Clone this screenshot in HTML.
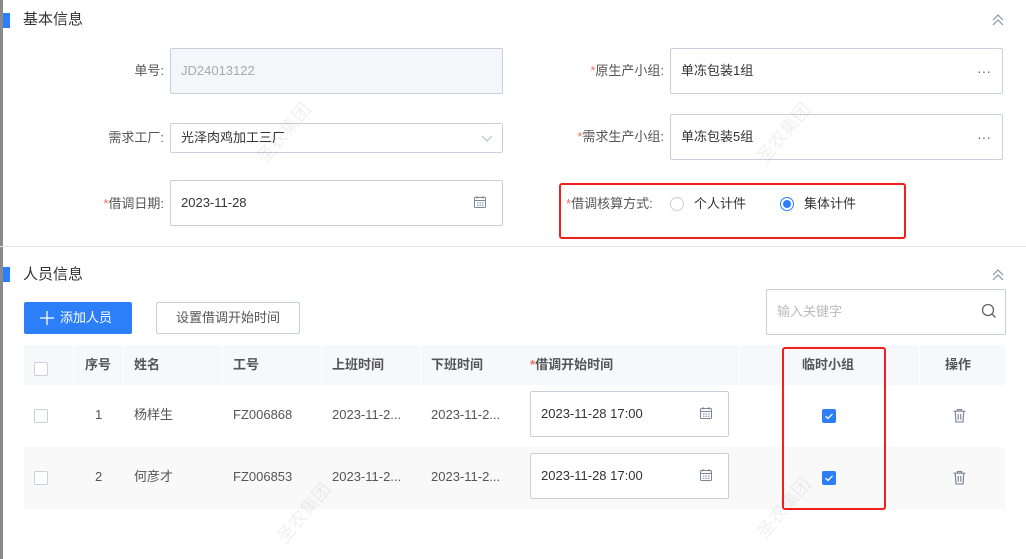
<!DOCTYPE html><html><head><meta charset="utf-8"><style>
*{box-sizing:border-box;margin:0;padding:0}
body{width:1026px;height:559px;background:#fff;font-family:"Liberation Sans","Noto Sans CJK SC",sans-serif;font-size:13px;line-height:16px;color:#333;position:relative;overflow:hidden}
.a{position:absolute}
.bar{position:absolute;left:3px;width:7px;height:15px;background:#2d7ff9}
.title{position:absolute;left:23px;font-size:15px;line-height:20px;color:#333}
.lbl{position:absolute;text-align:right;color:#555;font-size:13px;line-height:16px}
.lbl i{color:#f56c6c;font-style:normal}
.inp{position:absolute;border:1px solid #c9cfdc;border-radius:2px;padding-left:10px;display:flex;align-items:center;font-size:13px;color:#333;background:#fff}
.th{position:absolute;top:345px;height:40px;line-height:40px;font-weight:bold;color:#555;font-size:13px}
.td{position:absolute;color:#555;font-size:13px;line-height:16px}
.cb{position:absolute;width:14px;height:14px;border:1px solid #c9cfdc;border-radius:2px;background:#fff}
.ck{position:absolute;width:14px;height:14px;background:#2d7ff9;border-radius:2px}
.red{position:absolute;border:2px solid #f0201c;border-radius:3px}
</style></head><body>
<div class="a" style="left:0;top:0;width:3px;height:559px;background:#8a8a8a"></div>
<div class="bar" style="top:13px"></div><div class="title" style="top:10px">基本信息</div>
<svg class="a" style="left:991px;top:13px" width="14" height="14" viewBox="0 0 14 14" fill="none" stroke="#8a93a6" stroke-width="1.2"><path d="M2 7l5-5 5 5M2 12l5-5 5 5"/></svg>

<div class="lbl" style="left:60px;width:104px;top:63px">单号:</div>
<div class="inp" style="left:170px;top:48px;width:333px;height:46px;background:#f5f6f9;color:#aaa">JD24013122</div>
<div class="lbl" style="left:60px;width:104px;top:130px">需求工厂:</div>
<div class="inp" style="left:170px;top:123px;width:333px;height:30px">光泽肉鸡加工三厂</div>
<svg class="a" style="left:481px;top:132px" width="12" height="12" viewBox="0 0 12 12" fill="none" stroke="#b5bccb" stroke-width="1"><path d="M1 4l5 5 5-5"/></svg>
<div class="lbl" style="left:60px;width:104px;top:196px"><i>*</i>借调日期:</div>
<div class="inp" style="left:170px;top:180px;width:333px;height:46px">2023-11-28</div>

<div class="lbl" style="left:540px;width:124px;top:63px"><i>*</i>原生产小组:</div>
<div class="inp" style="left:670px;top:48px;width:333px;height:46px">单冻包装1组</div>
<div class="a" style="left:977px;top:63px;color:#666;font-size:14px">···</div>
<div class="lbl" style="left:540px;width:124px;top:129px"><i>*</i>需求生产小组:</div>
<div class="inp" style="left:670px;top:114px;width:333px;height:46px">单冻包装5组</div>
<div class="a" style="left:977px;top:129px;color:#666;font-size:14px">···</div>

<div class="lbl" style="left:566px;width:104px;top:196px;text-align:left"><i>*</i>借调核算方式:</div>
<div class="a" style="left:670px;top:197px;width:14px;height:14px;border:1px solid #c9cfdc;border-radius:50%"></div>
<div class="a" style="left:694px;top:196px">个人计件</div>
<div class="a" style="left:780px;top:197px;width:14px;height:14px;border:1px solid #2d7ff9;border-radius:50%"><div class="a" style="left:2px;top:2px;width:8px;height:8px;border-radius:50%;background:#2d7ff9"></div></div>
<div class="a" style="left:804px;top:196px">集体计件</div>
<div class="red" style="left:559px;top:183px;width:347px;height:56px"></div>

<div class="a" style="left:0;top:246px;width:1026px;height:1px;background:#e4e7ed"></div>

<div class="bar" style="top:267px"></div><div class="title" style="top:265px">人员信息</div>
<svg class="a" style="left:991px;top:268px" width="14" height="14" viewBox="0 0 14 14" fill="none" stroke="#8a93a6" stroke-width="1.2"><path d="M2 7l5-5 5 5M2 12l5-5 5 5"/></svg>
<div class="a" style="left:24px;top:302px;width:108px;height:32px;background:#2d7ff9;border-radius:2px"></div>
<svg class="a" style="left:40px;top:311px" width="14" height="14" viewBox="0 0 14 14" stroke="#fff" stroke-width="1.3"><path d="M7 0v14M0 7h14"/></svg>
<div class="a" style="left:60px;top:310px;color:#fff">添加人员</div>
<div class="a" style="left:156px;top:302px;width:144px;height:32px;border:1px solid #c9cfdc;border-radius:2px;line-height:30px;text-align:center;color:#555">设置借调开始时间</div>
<div class="inp" style="left:766px;top:289px;width:240px;height:46px;color:#bbb">输入关键字</div>
<svg class="a" style="left:981px;top:303px" width="16" height="16" viewBox="0 0 16 16" fill="none" stroke="#666" stroke-width="1.3"><circle cx="7" cy="7" r="5.5"/><path d="M11 11l3.5 3.5"/></svg>

<div class="a" style="left:24px;top:345px;width:981px;height:40px;background:#f7f8fb"></div>
<div class="a" style="left:24px;top:447px;width:981px;height:62px;background:#f9f9f9"></div>
<div class="a" style="left:73px;top:345px;width:1px;height:40px;background:#fff"></div>
<div class="a" style="left:123px;top:345px;width:1px;height:40px;background:#fff"></div>
<div class="a" style="left:222px;top:345px;width:1px;height:40px;background:#fff"></div>
<div class="a" style="left:321px;top:345px;width:1px;height:40px;background:#fff"></div>
<div class="a" style="left:420px;top:345px;width:1px;height:40px;background:#fff"></div>
<div class="a" style="left:739px;top:345px;width:1px;height:40px;background:#fff"></div>
<div class="a" style="left:919px;top:345px;width:1px;height:40px;background:#fff"></div>

<div class="cb" style="left:34px;top:362px"></div>
<div class="th" style="left:85px">序号</div>
<div class="th" style="left:134px">姓名</div>
<div class="th" style="left:233px">工号</div>
<div class="th" style="left:332px">上班时间</div>
<div class="th" style="left:431px">下班时间</div>
<div class="th" style="left:530px"><span style="color:#f56c6c">*</span>借调开始时间</div>
<div class="th" style="left:802px">临时小组</div>
<div class="th" style="left:945px">操作</div>

<div class="cb" style="left:34px;top:409px"></div>
<div class="td" style="left:95px;top:407px">1</div>
<div class="td" style="left:134px;top:407px">杨样生</div>
<div class="td" style="left:233px;top:407px">FZ006868</div>
<div class="td" style="left:332px;top:407px">2023-11-2...</div>
<div class="td" style="left:431px;top:407px">2023-11-2...</div>
<div class="inp" style="left:530px;top:391px;width:199px;height:46px">2023-11-28 17:00</div>
<div class="ck" style="left:822px;top:409px"></div>

<div class="cb" style="left:34px;top:471px"></div>
<div class="td" style="left:95px;top:469px">2</div>
<div class="td" style="left:134px;top:469px">何彦才</div>
<div class="td" style="left:233px;top:469px">FZ006853</div>
<div class="td" style="left:332px;top:469px">2023-11-2...</div>
<div class="td" style="left:431px;top:469px">2023-11-2...</div>
<div class="inp" style="left:530px;top:453px;width:199px;height:46px">2023-11-28 17:00</div>
<div class="ck" style="left:822px;top:471px"></div>

<svg width="0" height="0" style="position:absolute"><defs>
<symbol id="cal" viewBox="0 0 14 14"><g fill="none" stroke="#7d869a" stroke-width="1"><rect x="1.5" y="2.5" width="11" height="10" rx="1"/><path d="M1.5 5.5h11M4 1v2.5M10 1v2.5"/><path d="M4 8h1.5M6.5 8h1.5M9 8h1.5M4 10.3h1.5M6.5 10.3h1.5M9 10.3h1.5"/></g></symbol>
<symbol id="tick" viewBox="0 0 14 14"><path d="M3.5 7.2l2.4 2.3 4.6-4.6" fill="none" stroke="#fff" stroke-width="1.3"/></symbol>
<symbol id="bin" viewBox="0 0 14 14"><g fill="none" stroke="#7d869a" stroke-width="1.1"><path d="M1.5 3h11M5 3V1.5h4V3M3 3l.7 10h6.6L11 3M5.8 5.5v5.5M8.2 5.5v5.5"/></g></symbol>
</defs></svg>
<svg class="a" style="left:473px;top:195px" width="14" height="14"><use href="#cal"/></svg>
<svg class="a" style="left:699px;top:406px" width="14" height="14"><use href="#cal"/></svg>
<svg class="a" style="left:699px;top:468px" width="14" height="14"><use href="#cal"/></svg>
<svg class="a" style="left:822px;top:409px" width="14" height="14"><use href="#tick"/></svg>
<svg class="a" style="left:822px;top:471px" width="14" height="14"><use href="#tick"/></svg>
<svg class="a" style="left:952px;top:408px" width="15" height="15"><use href="#bin"/></svg>
<svg class="a" style="left:952px;top:470px" width="15" height="15"><use href="#bin"/></svg>

<div class="red" style="left:782px;top:347px;width:104px;height:163px"></div>

<div class="a" style="left:248px;top:125px;transform:rotate(-50deg);color:rgba(0,0,0,0.06);font-size:18px">圣农集团</div>
<div class="a" style="left:748px;top:125px;transform:rotate(-50deg);color:rgba(0,0,0,0.06);font-size:18px">圣农集团</div>
<div class="a" style="left:268px;top:505px;transform:rotate(-50deg);color:rgba(0,0,0,0.06);font-size:18px">圣农集团</div>
<div class="a" style="left:748px;top:500px;transform:rotate(-50deg);color:rgba(0,0,0,0.06);font-size:18px">圣农集团</div>
</body></html>
